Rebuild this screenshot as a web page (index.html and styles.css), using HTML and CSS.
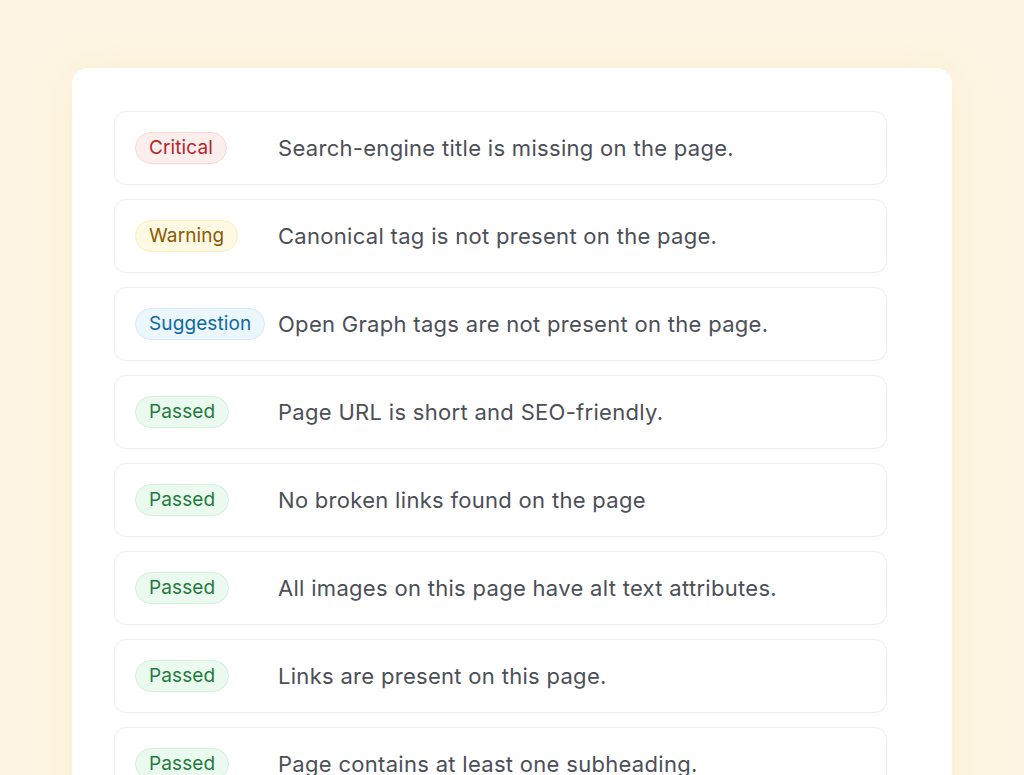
FILE: index.html
```html
<!DOCTYPE html>
<html>
<head>
<meta charset="utf-8">
<link rel="stylesheet" href="styles.css">
</head>
<body>
<main class="stage">
  <section class="card">
    <div class="row"><span class="badge critical">Critical</span><span class="msg">Search-engine title is missing on the page.</span></div>
    <div class="row"><span class="badge warning">Warning</span><span class="msg">Canonical tag is not present on the page.</span></div>
    <div class="row"><span class="badge suggestion">Suggestion</span><span class="msg">Open Graph tags are not present on the page.</span></div>
    <div class="row"><span class="badge passed">Passed</span><span class="msg">Page URL is short and SEO-friendly.</span></div>
    <div class="row"><span class="badge passed">Passed</span><span class="msg">No broken links found on the page</span></div>
    <div class="row"><span class="badge passed">Passed</span><span class="msg">All images on this page have alt text attributes.</span></div>
    <div class="row"><span class="badge passed">Passed</span><span class="msg">Links are present on this page.</span></div>
    <div class="row"><span class="badge passed">Passed</span><span class="msg">Page contains at least one subheading.</span></div>
  </section>
</main>
</body>
</html>
```

FILE: styles.css
```css
html, body {
  margin: 0;
  padding: 0;
  height: 100%;
  overflow: hidden;
}
body {
  background: #fdf5e3;
  font-family: "Inter", "Noto Sans", sans-serif;
}
.stage {
  padding: 68px 72px 0 72px;
}
.card {
  background: #ffffff;
  border-radius: 16px;
  padding: 43px 65px 40px 42px;
  display: flex;
  flex-direction: column;
  gap: 14px;
  box-shadow: 0 0 40px rgba(245, 225, 180, 0.35);
}
.row {
  display: grid;
  grid-template-columns: 128px 1fr;
  column-gap: 15px;
  align-items: center;
  height: 72px;
  padding: 0 20px;
  border: 1px solid #eeeeef;
  border-radius: 12px;
  box-shadow: 0 1px 3px rgba(0, 0, 0, 0.03);
}
.badge {
  justify-self: start;
  height: 30px;
  line-height: 30px;
  padding: 0 13px;
  border-radius: 16px;
  border: 1px solid;
  font-size: 19px;
  letter-spacing: 0.1px;
}
.critical { background: #fdeeee; border-color: #f8d7d7; color: #b3262a; }
.warning { background: #fef9e2; border-color: #fbefbd; color: #8c5a06; }
.suggestion { background: #ebf6fd; border-color: #d2e9f7; color: #0e6a9c; }
.passed { background: #ebfaef; border-color: #d2efdb; color: #1f7a3d; }
.msg {
  font-size: 22px;
  letter-spacing: 0.3px;
  color: #4b4f58;
}
```
